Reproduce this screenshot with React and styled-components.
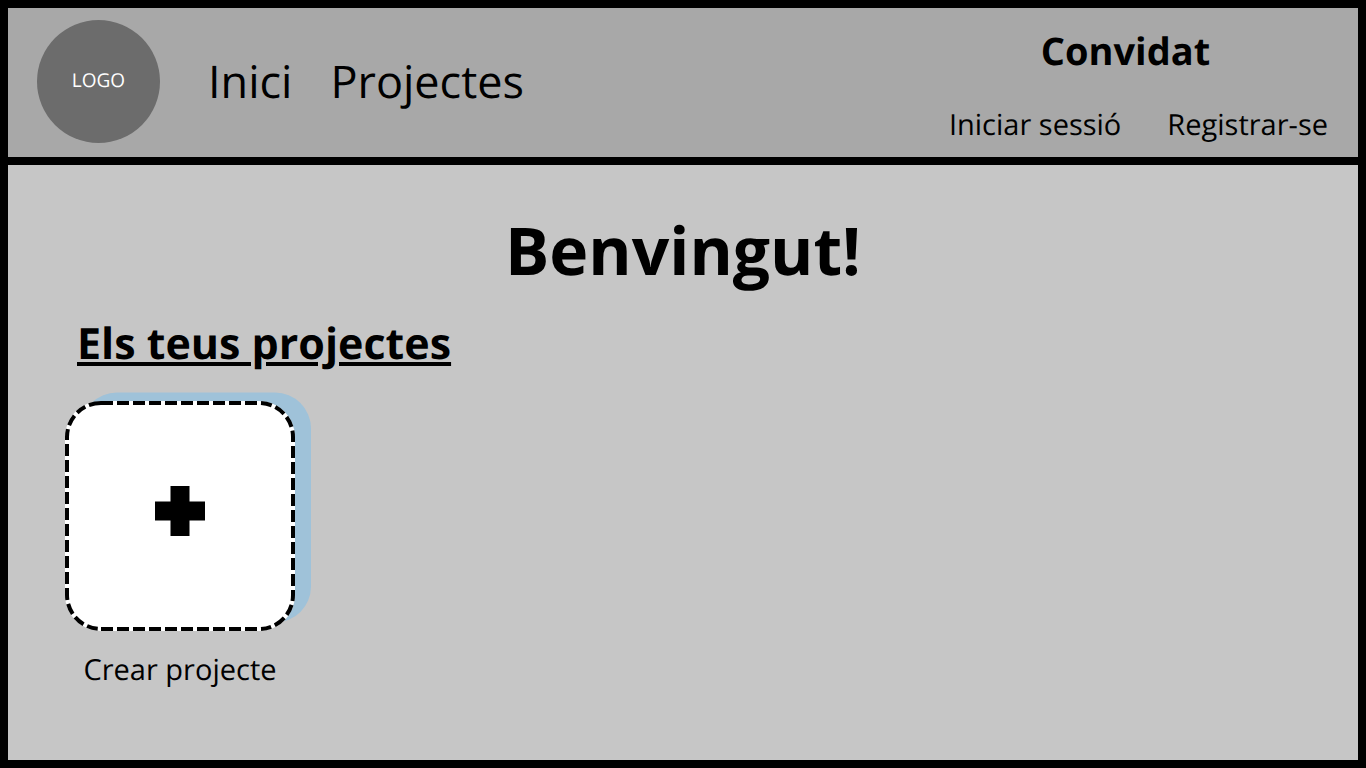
import React from "react";
import styled, { createGlobalStyle } from "styled-components";

const GlobalStyle = createGlobalStyle`
  *, *::before, *::after { box-sizing: border-box; }
  body { margin: 0; background: #c6c6c6; color: #000; font-family: "Open Sans", "Noto Sans", sans-serif; text-rendering: geometricPrecision; }
  h1, h2, p { margin: 0; }
  a { color: inherit; text-decoration: none; }
`;

const Page = styled.div`
  min-height: 100vh;
  display: flex;
  flex-direction: column;
  border: 8px solid #000;
  background: #c6c6c6;
`;

const Header = styled.header`
  display: flex;
  align-items: flex-start;
  justify-content: space-between;
  padding: 12px 30px 12px 29px;
  background: #a8a8a8;
  border-bottom: 8px solid #000;
`;

const Brand = styled.div`
  display: flex;
  align-items: center;
  gap: 48px;
`;

const Logo = styled.a`
  display: flex;
  align-items: center;
  justify-content: center;
  width: 123px;
  height: 123px;
  padding-bottom: 4px;
  border-radius: 50%;
  background: #6c6c6c;
  && { color: #fff; }
  font-size: 19px;
`;

const Nav = styled.nav`
  display: flex;
  gap: 38px;
  font-size: 45px;
  line-height: 60px;
`;

const Account = styled.section`
  display: flex;
  flex-direction: column;
  align-items: center;
  gap: 30px;
  padding-top: 7px;
`;

const UserName = styled.p`
  padding-right: 26px;
  font-size: 38px;
  font-weight: 700;
  line-height: 48px;
`;

const AccountLinks = styled.div`
  display: flex;
  gap: 46px;
  font-size: 29px;
  line-height: 40px;
`;

const Main = styled.main`
  flex: 1;
  padding: 40px 57px;
`;

const Title = styled.h1`
  font-size: 66px;
  line-height: 90px;
  text-align: center;
`;

const Projects = styled.section`
  display: flex;
  flex-direction: column;
  align-items: flex-start;
`;

const Subtitle = styled.h2`
  margin: 18px 0 28px 12px;
  font-size: 43px;
  line-height: 60px;
  text-decoration: underline;
`;

const CreateButton = styled.button`
  display: flex;
  flex-direction: column;
  align-items: center;
  gap: 19px;
  padding: 0;
  border: 0;
  background: none;
  color: inherit;
  font: inherit;
  font-size: 29px;
  line-height: 40px;
  text-rendering: inherit;
  cursor: pointer;
`;

const Card = styled.svg`
  display: block;
  width: 230px;
  height: 230px;
  overflow: visible;
`;

export default function App() {
  return (
    <>
      <GlobalStyle />
      <Page>
        <Header>
          <Brand>
            <Logo href="#">LOGO</Logo>
            <Nav>
              <a href="#inici">Inici</a>
              <a href="#projectes">Projectes</a>
            </Nav>
          </Brand>
          <Account>
            <UserName>Convidat</UserName>
            <AccountLinks>
              <a href="#sessio">Iniciar sessió</a>
              <a href="#registre">Registrar-se</a>
            </AccountLinks>
          </Account>
        </Header>
        <Main>
          <Title>Benvingut!</Title>
          <Projects>
            <Subtitle>Els teus projectes</Subtitle>
            <CreateButton type="button">
              <Card viewBox="0 0 230 230" aria-hidden="true">
                <rect x="16" y="-8.5" width="230" height="230" rx="36" fill="#9fc2d9" />
                <rect width="230" height="230" rx="36" fill="#fff" />
                <g fill="none" stroke="#000" strokeWidth="4">
                  <path d="M52 2H192" strokeDasharray="12 4" />
                  <path d="M36 228H192" strokeDasharray="12 4" />
                  <path d="M2 43V187" strokeDasharray="12 4" />
                  <path d="M228 45V189" strokeDasharray="12 4" />
                  <path d="M2 39V36A34 34 0 0 1 36 2H48" strokeDasharray="11 4 11 4 10 4 30 4" />
                  <path d="M196 2A34 34 0 0 1 228 36V41" strokeDasharray="11 4 11 4 11 4 20 4" />
                  <path d="M2 187V194A34 34 0 0 0 36 228" strokeDasharray="12 4 11 4 11 4 11 8" />
                  <path d="M228 189V194A34 34 0 0 1 196 228" strokeDasharray="11 4 11 4 12 4 15 4" />
                </g>
                <path d="M105.5 85h19v15.5h15.5v19h-15.5v15.5h-19v-15.5h-15.500v-19h15.500z" fill="#000" />
              </Card>
              Crear projecte
            </CreateButton>
          </Projects>
        </Main>
      </Page>
    </>
  );
}
